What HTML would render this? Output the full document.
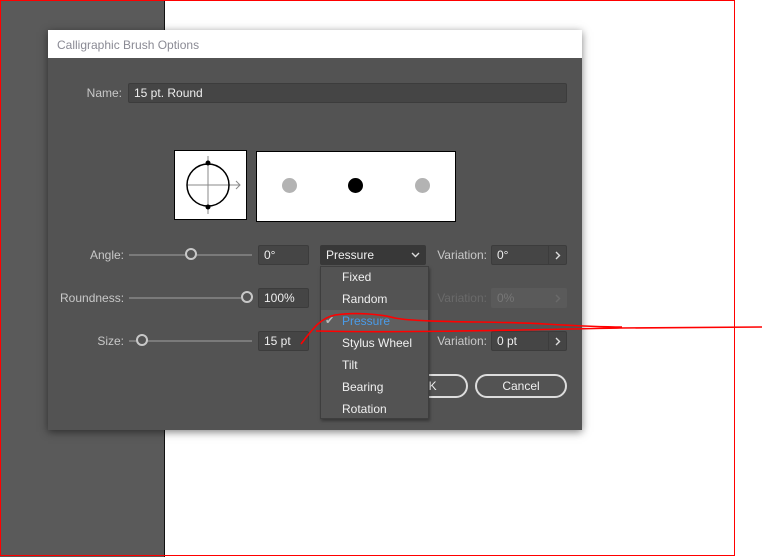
<!DOCTYPE html>
<html><head><style>
*{box-sizing:border-box;margin:0;padding:0}
body{width:762px;height:557px;background:#fff;position:relative;overflow:hidden;font-family:"Liberation Sans",sans-serif;font-size:12px}
.a{position:absolute}
.lbl{color:#c8c8c8;text-align:right}
.inp{background:#454545;border:1px solid #3c3c3c;border-radius:2px;color:#eee;padding:3px 5px;height:20px;line-height:13px}
.track{height:2px;background:#7a7a7a}
.thumb{width:12px;height:12px;border:2px solid #c8c8c8;border-radius:50%;background:#535353}
.mi{position:absolute;left:21px;color:#f0f0f0;font-size:12px}
</style></head><body>
<div class="a" style="left:0;top:0;width:164px;height:557px;background:#5a5a5a"></div>
<div class="a" style="left:164px;top:0;width:1px;height:557px;background:#111"></div>
<div class="a" style="left:0;top:0;width:735px;height:556px;border:1px solid #f00"></div>
<div class="a" style="left:48px;top:30px;width:534px;height:400px;background:#535353;box-shadow:0 2px 8px rgba(0,0,0,.5)"></div>
<div class="a" style="left:48px;top:30px;width:534px;height:28px;background:#fff;color:#8a8a94;padding:8px 9px;font-size:12px">Calligraphic Brush Options</div>
<div class="a lbl" style="left:60px;top:86px;width:62px">Name:</div>
<div class="a inp" style="left:128px;top:83px;width:439px">15 pt. Round</div>
<div class="a" style="left:174px;top:150px;width:73px;height:70px;background:#fff;border:1px solid #000"></div>
<svg class="a" style="left:174px;top:150px" width="73" height="70"><line x1="13" y1="35" x2="66" y2="35" stroke="#888"/><path d="M62 31 L66 35 L62 39" stroke="#888" fill="none"/><line x1="34" y1="6" x2="34" y2="64" stroke="#888"/><circle cx="34" cy="35" r="21" stroke="#000" stroke-width="1.5" fill="none"/><circle cx="34" cy="13" r="2.5"/><circle cx="34" cy="57" r="2.5"/></svg>
<div class="a" style="left:256px;top:151px;width:200px;height:71px;background:#fff;border:1px solid #000"></div>
<div class="a" style="left:282px;top:178px;width:15px;height:15px;border-radius:50%;background:#b3b3b3"></div>
<div class="a" style="left:348px;top:178px;width:15px;height:15px;border-radius:50%;background:#000"></div>
<div class="a" style="left:415px;top:178px;width:15px;height:15px;border-radius:50%;background:#b3b3b3"></div>

<div class="a lbl" style="left:60px;top:248px;width:64px">Angle:</div>
<div class="a track" style="left:129px;top:254px;width:123px"></div>
<div class="a thumb" style="left:185px;top:248px"></div>
<div class="a inp" style="left:258px;top:245px;width:51px">0°</div>
<div class="a" style="left:320px;top:245px;width:106px;height:20px;background:#383838;border-radius:2px;color:#f0f0f0;padding:3px 6px">Pressure<svg style="position:absolute;right:6px;top:7px" width="9" height="6"><path d="M1 1 L4.5 4.5 L8 1" stroke="#ddd" stroke-width="1.4" fill="none"/></svg></div>
<div class="a lbl" style="left:430px;top:248px;width:57px">Variation:</div>
<div class="a inp" style="left:491px;top:245px;width:76px">0°</div>
<div class="a" style="left:548px;top:246px;width:1px;height:18px;background:#3c3c3c"></div>
<svg class="a" style="left:555px;top:251px" width="6" height="9"><path d="M1 1 L4.5 4.5 L1 8" stroke="#ddd" stroke-width="1.4" fill="none"/></svg>

<div class="a lbl" style="left:60px;top:291px;width:64px">Roundness:</div>
<div class="a track" style="left:129px;top:297px;width:112px"></div>
<div class="a thumb" style="left:241px;top:291px"></div>
<div class="a inp" style="left:258px;top:288px;width:51px">100%</div>
<div class="a lbl" style="left:430px;top:291px;width:57px;color:#6a6a6a">Variation:</div>
<div class="a inp" style="left:491px;top:288px;width:76px;background:#5a5a5a;border-color:#5a5a5a;color:#777">0%</div>
<svg class="a" style="left:555px;top:294px" width="6" height="9"><path d="M1 1 L4.5 4.5 L1 8" stroke="#6a6a6a" stroke-width="1.4" fill="none"/></svg>

<div class="a lbl" style="left:60px;top:334px;width:64px">Size:</div>
<div class="a track" style="left:129px;top:340px;width:123px"></div>
<div class="a thumb" style="left:136px;top:334px"></div>
<div class="a inp" style="left:258px;top:331px;width:51px">15 pt</div>
<div class="a lbl" style="left:430px;top:334px;width:57px">Variation:</div>
<div class="a inp" style="left:491px;top:331px;width:76px">0 pt</div>
<div class="a" style="left:548px;top:332px;width:1px;height:18px;background:#3c3c3c"></div>
<svg class="a" style="left:555px;top:337px" width="6" height="9"><path d="M1 1 L4.5 4.5 L1 8" stroke="#ddd" stroke-width="1.4" fill="none"/></svg>

<div class="a" style="left:380px;top:374px;width:88px;height:24px;border:2px solid #ddd;border-radius:12px;color:#f0f0f0;text-align:center;line-height:20px;padding-left:8px">OK</div>
<div class="a" style="left:475px;top:374px;width:92px;height:24px;border:2px solid #ddd;border-radius:12px;color:#f0f0f0;text-align:center;line-height:20px">Cancel</div>

<div class="a" style="left:320px;top:266px;width:109px;height:153px;background:#535353;border:1px solid #3e3e3e;box-shadow:1px 2px 3px rgba(0,0,0,.35)">
<div class="mi" style="top:3px">Fixed</div>
<div class="mi" style="top:25px">Random</div>
<div class="a" style="left:0;top:43px;width:107px;height:22px;background:#5f5f5f"></div>
<div class="mi" style="left:4px;top:47px;color:#bbb;font-size:11px">✔</div>
<div class="mi" style="top:47px;color:#4a9be8">Pressure</div>
<div class="mi" style="top:69px">Stylus Wheel</div>
<div class="mi" style="top:91px">Tilt</div>
<div class="mi" style="top:113px">Bearing</div>
<div class="mi" style="top:135px">Rotation</div>
</div>
<svg class="a" style="left:0;top:0" width="762" height="557"><path d="M301 344 C312 330 320 318 335 315 C355 312 380 314 395 318 C420 323 500 321 545 324 C580 326 610 327 622 327" stroke="#f00" stroke-width="1.6" fill="none"/><path d="M316 331 C400 333 520 330 620 328 L762 327" stroke="#f00" stroke-width="1.6" fill="none"/></svg>
</body></html>
